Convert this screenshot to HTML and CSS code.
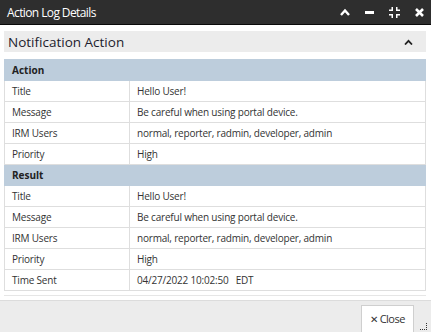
FILE: index.html
```html
<!DOCTYPE html>
<html lang="en">
<head>
    <meta charset="UTF-8">
    <title>Action Log Details</title>
    <link rel="stylesheet" href="styles.css">
</head>
<body>
    <div class="dialog">
        <!-- Window title bar -->
        <div class="titlebar">
            <span class="title">Action Log Details</span>
            <div class="win-icons">
                <svg width="10" height="8" viewBox="0 0 10 8"><path d="M1 7 L5 2.5 L9 7" fill="none" stroke="#fff" stroke-width="2.4"/></svg>
                <svg width="9" height="3" viewBox="0 0 9 3"><rect width="9" height="3" fill="#fff"/></svg>
                <svg width="11" height="11" viewBox="0 0 11 11" fill="#fff">
                    <path d="M2.5 0h1.5v4H0V2.5h2.5z M7 0h1.5v2.5H11V4H7z M0 7h4v4H2.5V8.5H0z M7 7h4v1.5H8.5V11H7z"/>
                </svg>
                <svg width="9" height="9" viewBox="0 0 9 9"><path d="M1 1 L8 8 M8 1 L1 8" stroke="#fff" stroke-width="2.6"/></svg>
            </div>
        </div>

        <!-- Main content -->
        <div class="content">
            <div class="panel">
                <div class="panel-head">
                    <h2>Notification Action</h2>
                    <svg width="9" height="6" viewBox="0 0 9 6"><path d="M1 5.5 L4.5 1.8 L8 5.5" fill="none" stroke="#222" stroke-width="1.8"/></svg>
                </div>
                <table class="details">
                    <tr class="group"><th colspan="2">Action</th></tr>
                    <tr><td>Title</td><td>Hello User!</td></tr>
                    <tr><td>Message</td><td>Be careful when using portal device.</td></tr>
                    <tr><td>IRM Users</td><td>normal, reporter, radmin, developer, admin</td></tr>
                    <tr><td>Priority</td><td>High</td></tr>
                    <tr class="group"><th colspan="2">Result</th></tr>
                    <tr><td>Title</td><td>Hello User!</td></tr>
                    <tr><td>Message</td><td>Be careful when using portal device.</td></tr>
                    <tr><td>IRM Users</td><td>normal, reporter, radmin, developer, admin</td></tr>
                    <tr><td>Priority</td><td>High</td></tr>
                    <tr><td>Time Sent</td><td>04/27/2022 10:02:50 &nbsp; EDT</td></tr>
                </table>
            </div>
        </div>

        <!-- Footer with close button -->
        <div class="footer">
            <button class="close-btn"><span class="x">&#x2715;</span>Close</button>
            <svg class="grip" width="8" height="8" viewBox="0 0 8 8" fill="#333">
                <rect x="6" y="0" width="1" height="1"/><rect x="6" y="2" width="1" height="1"/><rect x="6" y="4" width="1" height="1"/><rect x="6" y="6" width="1" height="1"/>
                <rect x="0" y="6" width="1" height="1"/><rect x="2" y="6" width="1" height="1"/><rect x="4" y="6" width="1" height="1"/>
            </svg>
        </div>
    </div>
</body>
</html>
```

FILE: styles.css
```css
body {
    margin: 0;
    font-family: 'Open Sans', sans-serif;
    color: #333;
    background: #fff;
}

.dialog {
    width: 431px;
    height: 332px;
    display: flex;
    flex-direction: column;
    overflow: hidden;
}

/* Title bar */
.titlebar {
    height: 24px;
    background-color: #2e2e2e;
    border-bottom: 1px solid #0a0a0a;
    display: flex;
    align-items: center;
    justify-content: space-between;
    padding: 0 7px 0 7px;
    flex-shrink: 0;
}

.title {
    color: #fff;
    font-size: 12px;
    letter-spacing: -0.6px;
}

.win-icons {
    display: flex;
    align-items: center;
    gap: 15px;
}

/* Content */
.content {
    flex: 1;
    padding: 6px 5px 0 4px;
}

.panel {
    border-bottom: 1px solid #e6e6e6;
    padding-bottom: 4px;
}

.panel-head {
    height: 21px;
    background-color: #ececec;
    display: flex;
    align-items: center;
    justify-content: space-between;
    padding: 0 13px 0 4px;
    margin-bottom: 7px;
}

.panel-head h2 {
    margin: 0;
    font-size: 13.5px;
    font-weight: normal;
    color: #1c1c2c;
}

/* Details table */
.details {
    width: 100%;
    border-collapse: collapse;
    font-size: 10px;
    letter-spacing: -0.2px;
}

.details th,
.details td {
    height: 20px;
    padding: 0 7px;
    text-align: left;
    border: 1px solid #dedede;
}

.details td:first-child {
    width: 110px;
}

.details .group th {
    background-color: #bdcddc;
    border-color: #bdcddc;
    font-weight: bold;
    color: #222;
    letter-spacing: 0;
}

/* Footer */
.footer {
    height: 31px;
    background-color: #ececec;
    border-top: 1px solid #dcdcdc;
    display: flex;
    align-items: flex-start;
    justify-content: flex-end;
    flex-shrink: 0;
    position: relative;
}

.close-btn {
    width: 53px;
    height: 30px;
    margin-top: 4px;
    background: #fff;
    border: 1px solid #cfcfcf;
    font-family: 'Open Sans', sans-serif;
    font-size: 11px;
    color: #333;
    padding: 0 0 3px;
    letter-spacing: -0.5px;
}

.close-btn .x {
    font-size: 10px;
    margin-right: 2px;
}

.grip {
    position: absolute;
    right: 3px;
    bottom: 1px;
}

.footer::after {
    content: "";
    width: 17px;
}
```
